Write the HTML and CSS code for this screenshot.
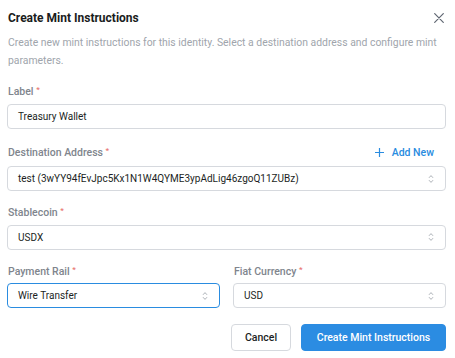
FILE: index.html
```html
<!DOCTYPE html>
<html>
<head>
<meta charset="utf-8">
<link rel="stylesheet" href="styles.css">
</head>
<body>
<div class="dialog">
  <div class="header">
    <h2 class="title">Create Mint Instructions</h2>
    <button class="close" aria-label="Close">
      <svg width="10" height="10" viewBox="0 0 10 10"><path d="M0.7 0.7L9.3 9.3M9.3 0.7L0.7 9.3" stroke="#5f6672" stroke-width="1.2" stroke-linecap="round"/></svg>
    </button>
  </div>
  <p class="desc">Create new mint instructions for this identity. Select a destination address and configure mint parameters.</p>

  <div class="field">
    <div class="label-row"><label class="label">Label <span class="req">*</span></label></div>
    <div class="input">Treasury Wallet</div>
  </div>

  <div class="field">
    <div class="label-row tall">
      <label class="label">Destination Address <span class="req">*</span></label>
      <button class="add-new">
        <svg width="9" height="9" viewBox="0 0 9 9"><path d="M4.5 0V9M0 4.5H9" stroke="#2a8ce0" stroke-width="1.2"/></svg>
        Add New
      </button>
    </div>
    <div class="input select">test (3wYY94fEvJpc5Kx1N1W4QYME3ypAdLig46zgoQ11ZUBz)<span class="chev"><svg width="6" height="10" viewBox="0 0 6 10"><path d="M1 3.8L3 1.6L5 3.8M1 6.2L3 8.4L5 6.2" fill="none" stroke="#a3a8af" stroke-width="0.9"/></svg></span></div>
  </div>

  <div class="field">
    <div class="label-row"><label class="label">Stablecoin <span class="req">*</span></label></div>
    <div class="input select">USDX<span class="chev"><svg width="6" height="10" viewBox="0 0 6 10"><path d="M1 3.8L3 1.6L5 3.8M1 6.2L3 8.4L5 6.2" fill="none" stroke="#a3a8af" stroke-width="0.9"/></svg></span></div>
  </div>

  <div class="row">
    <div class="field">
      <div class="label-row"><label class="label">Payment Rail <span class="req">*</span></label></div>
      <div class="input select focus">Wire Transfer<span class="chev"><svg width="6" height="10" viewBox="0 0 6 10"><path d="M1 3.8L3 1.6L5 3.8M1 6.2L3 8.4L5 6.2" fill="none" stroke="#a3a8af" stroke-width="0.9"/></svg></span></div>
    </div>
    <div class="field">
      <div class="label-row"><label class="label">Fiat Currency <span class="req">*</span></label></div>
      <div class="input select">USD<span class="chev"><svg width="6" height="10" viewBox="0 0 6 10"><path d="M1 3.8L3 1.6L5 3.8M1 6.2L3 8.4L5 6.2" fill="none" stroke="#a3a8af" stroke-width="0.9"/></svg></span></div>
    </div>
  </div>

  <div class="actions">
    <button class="btn cancel">Cancel</button>
    <button class="btn primary">Create Mint Instructions</button>
  </div>
</div>
</body>
</html>
```
FILE: styles.css
```css
* { box-sizing: border-box; }
html, body { margin: 0; padding: 0; background: #fff; }
body { font-family: Roboto, "Liberation Sans", Arial, sans-serif; color: #1c1f24; }
.dialog { padding: 8px 9px 0 7px; display: flex; flex-direction: column; }
.header { display: flex; justify-content: space-between; align-items: center; height: 20px; padding-left: 1px; }
.title { margin: 0; font-size: 12px; font-weight: 700; color: #1a1c20; }
.close { border: 0; background: none; padding: 0; margin-right: 2px; display: flex; cursor: pointer; }
.desc { margin: 6px 0 0 1px; font-size: 10.4px; line-height: 18px; color: #a0a5ac; }
.field { display: flex; flex-direction: column; margin-top: 14.5px; }
.dialog > .field:first-of-type { margin-top: 13px; }
.label-row { display: flex; justify-content: space-between; align-items: center; height: 14px; margin-bottom: 5px; padding-left: 1px; }
.label-row.tall { height: 18px; }
.label { font-size: 10.5px; font-weight: 500; color: #80858d; }
.req { color: #e8706e; font-size: 8px; vertical-align: top; }
.add-new { border: 0; background: none; padding: 0; margin-right: 12px; font-family: inherit; font-size: 10.5px; font-weight: 500; color: #2a8ce0; display: flex; align-items: center; gap: 8px; }
.input { height: 25px; border: 1px solid #d6d9de; border-radius: 4px; font-size: 10px; color: #1c1f24; display: flex; align-items: center; padding: 0 11px 0 10px; }
.select { justify-content: space-between; }
.chev { display: flex; }
.focus { border-color: #2a8ce0; }
.row { display: grid; grid-template-columns: 1fr 1fr; gap: 13px; }
.actions { display: flex; justify-content: flex-end; gap: 10px; margin-top: 15.5px; }
.btn { height: 27px; border-radius: 4px; font-family: inherit; font-size: 10.5px; font-weight: 500; padding: 0; }
.cancel { background: #fff; border: 1px solid #d6d9de; color: #1c1f24; width: 60px; }
.primary { background: #2b8ce2; border: 1px solid #2b8ce2; color: #fff; width: 145px; }
```
